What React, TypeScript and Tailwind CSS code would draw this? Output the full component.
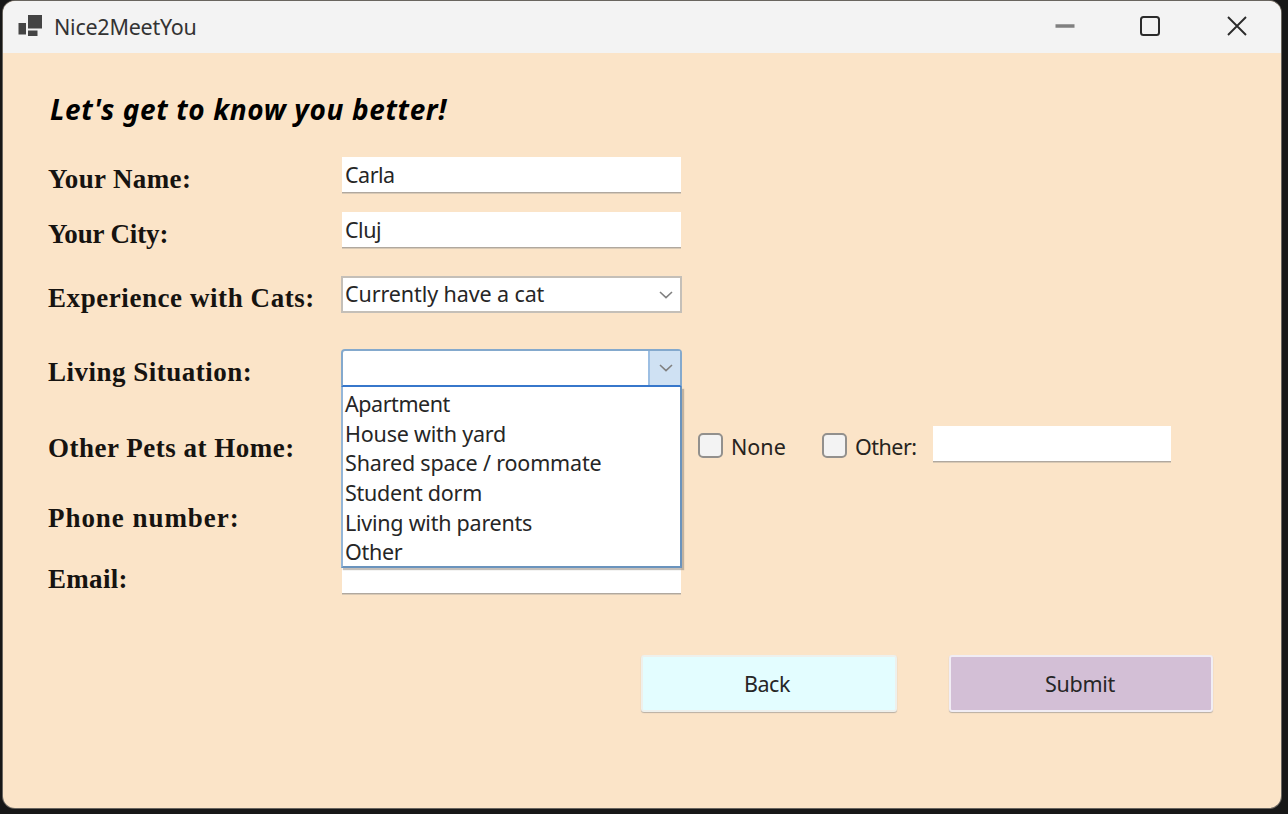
import type { ReactNode } from 'react';

const uiFont = "font-['Noto_Sans','Open_Sans',sans-serif]";

const options = [
  { text: 'Apartment', tracking: 'tracking-[-0.45px]' },
  { text: 'House with yard', tracking: 'tracking-[-0.2px]' },
  { text: 'Shared space / roommate', tracking: 'tracking-[-0.17px]' },
  { text: 'Student dorm', tracking: 'tracking-[-0.25px]' },
  { text: 'Living with parents', tracking: 'tracking-[-0.24px]' },
  { text: 'Other', tracking: 'tracking-[-0.3px]' },
];

function Row({ label, className, tracking, children }: { label: string; className: string; tracking: string; children?: ReactNode }) {
  return (
    <div className={`flex h-9 items-center ${className}`}>
      <div className={`w-[294px] shrink-0 whitespace-nowrap pt-2 font-['Liberation_Serif',serif] text-[27px] leading-9 font-bold text-[#161310] ${tracking}`}>
        {label}
      </div>
      {children}
    </div>
  );
}

function TextBox({ value = '', className }: { value?: string; className: string }) {
  return (
    <div className={`flex h-9 items-center border-b border-[#b0a89f] bg-white pt-[2px] pl-[3px] text-[21.5px] tracking-[-0.5px] text-[#262626] shadow-[0_1px_0_#d8c9b5] ${className}`}>
      {value}
    </div>
  );
}

function Chevron() {
  return (
    <svg className="-mr-px" width="14" height="8" viewBox="0 0 14 8" fill="none" stroke="#808080" strokeWidth="1.600">
      <path d="M1 1l6 5.600L13 1" />
    </svg>
  );
}

function CheckBox({ label, className }: { label: string; className: string }) {
  return (
    <div className={`flex shrink-0 items-center gap-2 whitespace-nowrap ${className}`}>
      <span className="mt-[2px] h-[25px] w-[25px] rounded-[5px] border-2 border-[#92908d] bg-[#f3f3f3]" />
      <span className="pt-[6px] text-[21.5px] leading-8 text-[#262320]">{label}</span>
    </div>
  );
}

export default function App() {
  return (
    <div className={`h-[814px] w-[1288px] overflow-hidden bg-[#171717] pt-px pl-[3px] ${uiFont}`}>
      <div className="flex h-[807px] w-[1278px] flex-col overflow-hidden rounded-xl bg-[#fbe4c8] shadow-[0_0_0_1px_#69655f]">
        <header className="flex h-[52px] shrink-0 items-center bg-[#f3f3f3] pl-[15px]">
          <svg className="-mt-[3px]" width="24" height="22" viewBox="0 0 24 22" fill="#444">
            <path d="M10 0H24v13.500H10zM.5 8H8v11.500H.5zM10 15.500h9.500v5.500H10z" />
          </svg>
          <span className="ml-3 pt-px text-[21.5px] tracking-[-0.25px] text-[#333]">Nice2MeetYou</span>
          <div className="ml-auto flex items-center pr-[34px] pb-[2px]">
            <svg width="20" height="20" viewBox="0 0 20 20" stroke="#808080" strokeWidth="3.500">
              <path d="M.5 10h19" />
            </svg>
            <svg className="ml-[65px]" width="20" height="20" viewBox="0 0 20 20" fill="none" stroke="#2b2b2b" strokeWidth="2">
              <rect x="1" y="1" width="18" height="18" rx="2.500" />
            </svg>
            <svg className="ml-[67px]" width="20" height="20" viewBox="0 0 20 20" stroke="#2b2b2b" strokeWidth="1.900">
              <path d="M1 1l18 18M19 1L1 19" />
            </svg>
          </div>
        </header>

        <main className="flex flex-col pl-[45px]">
          <h1 className="mt-[36px] ml-[2px] h-10 text-[28px] leading-10 font-bold tracking-[0.62px] whitespace-nowrap text-black italic">
            Let's get to know you better!
          </h1>

          <Row label="Your Name:" tracking="tracking-[0.35px]" className="mt-[28px]">
            <TextBox value="Carla" className="w-[339px]" />
          </Row>
          <Row label="Your City:" tracking="tracking-[-0.15px]" className="mt-[19px]">
            <TextBox value="Cluj" className="w-[339px]" />
          </Row>
          <Row label="Experience with Cats:" tracking="tracking-[0.57px]" className="mt-[28px]">
            <div className="-ml-px flex h-[37px] w-[341px] items-center justify-between border-2 border-[#c4bfb8] bg-white pt-px pr-2 pl-[2px] text-[21.5px] tracking-[-0.1px] text-[#262626]">
              Currently have a cat
              <Chevron />
            </div>
          </Row>
          <Row label="Living Situation:" tracking="tracking-[0.5px]" className="mt-[38px]">
            <div className="relative -ml-px h-[38px] w-[341px]">
              <div className="flex h-[38px] justify-end rounded-t-sm border-2 border-[#84a9cd] border-b-[#3777cb] bg-white">
                <div className="flex w-8 items-center justify-center border-l-2 border-[#9dbfe3] bg-[#cfe1f3]">
                  <Chevron />
                </div>
              </div>
              <ul className="absolute top-[38px] left-0 z-10 h-[181px] w-[341px] border-r-2 border-b-2 border-l-2 border-[#6a93bd] border-l-[#94b6d8] bg-white pt-[2px] pl-[2px] text-[21.5px] text-[#262626] shadow-[2px_2px_1px_#87807780]">
                {options.map((o) => (
                  <li key={o.text} className={`h-[29.700px] leading-[30px] whitespace-nowrap ${o.tracking}`}>
                    {o.text}
                  </li>
                ))}
              </ul>
            </div>
          </Row>
          <Row label="Other Pets at Home:" tracking="tracking-[0.5px]" className="mt-[40px]">
            <CheckBox label="None" className="ml-[356px] w-[124px]" />
            <CheckBox label="Other:" className="w-[111px] tracking-[-0.5px]" />
            <TextBox className="w-[238px]" />
          </Row>
          <Row label="Phone number:" tracking="tracking-[0.95px]" className="mt-[34px]">
            <TextBox className="w-[339px]" />
          </Row>
          <Row label="Email:" tracking="tracking-[0.3px]" className="mt-[25px]">
            <TextBox className="mt-px w-[339px]" />
          </Row>

          <div className="mt-[62px] ml-[593px] flex gap-[52px]">
            <button className="h-[57px] w-[256px] rounded-[3px] border-2 border-[#eef0ec] bg-[#e3fdff] pt-[2px] pr-[4px] text-[21.5px] tracking-[-0.4px] text-[#262626] shadow-[0_1px_1px_#b9afa3]">
              Back
            </button>
            <button className="h-[57px] w-[264px] rounded-[3px] border-2 border-[#f1edf4] bg-[#d3bfd6] pt-[2px] pr-[2px] text-[21.5px] tracking-[-0.25px] text-[#262626] shadow-[0_1px_1px_#b9afa3]">
              Submit
            </button>
          </div>
        </main>
      </div>
    </div>
  );
}
